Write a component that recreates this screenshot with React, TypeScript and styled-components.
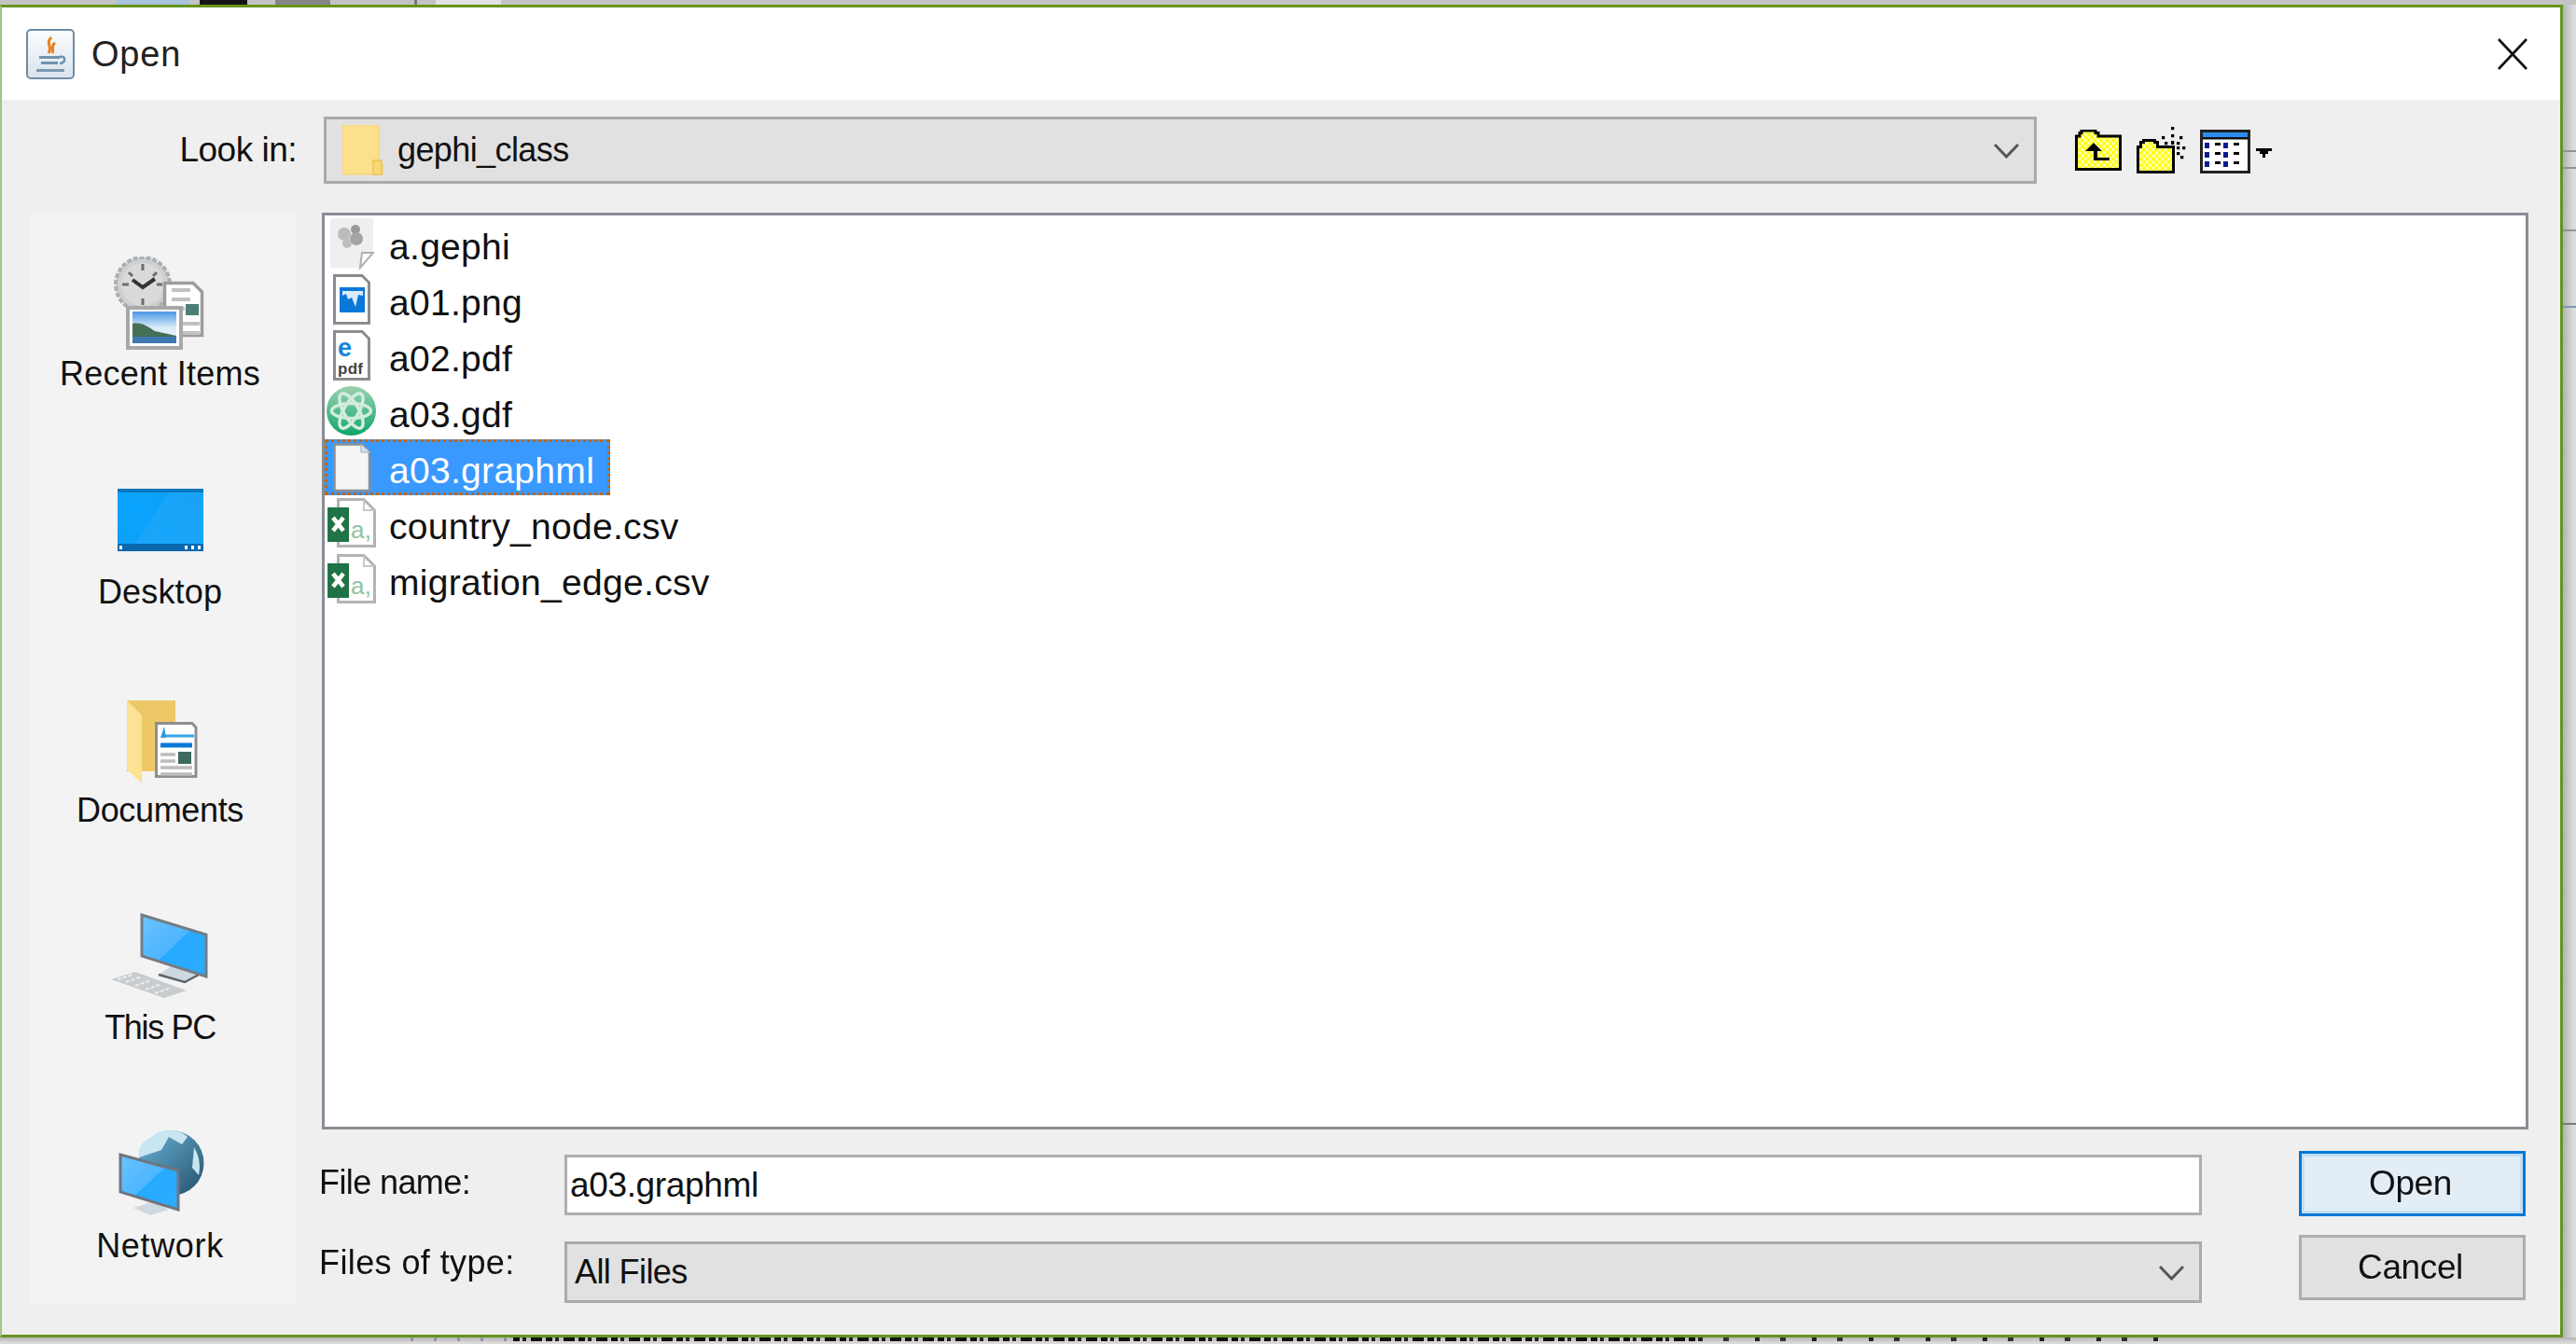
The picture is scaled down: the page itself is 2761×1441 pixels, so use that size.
import React from "react";
import styled, { createGlobalStyle } from "styled-components";

const Global = createGlobalStyle`
  html, body { margin: 0; padding: 0; background: #dcdcdc; }
  body { font-family: "Liberation Sans", Arial, sans-serif; overflow: hidden; }
  * { box-sizing: border-box; }
`;

const Page = styled.div`
  display: grid;
  grid-template-columns: 2747px 14px;
  grid-template-rows: 5px 1429px 7px;
  width: 2761px;
  height: 1441px;
  filter: blur(0.55px);
`;

const TopStrip = styled.div`
  grid-column: 1 / 3;
  display: flex;
  background: #c4c4c4;
`;
const TopSeg = styled.span<{ $x: number; $w: number; $c: string }>`
  width: ${(p) => p.$w}px;
  margin-left: ${(p) => p.$x}px;
  background: ${(p) => p.$c};
`;

const RightGutter = styled.div`
  background:
    linear-gradient(#8d9299, #8d9299) 0 156px / 100% 2px no-repeat,
    linear-gradient(#8d9299, #8d9299) 0 174px / 100% 2px no-repeat,
    linear-gradient(#8d9299, #8d9299) 0 241px / 100% 2px no-repeat,
    linear-gradient(#7f96ad, #7f96ad) 0 323px / 100% 2px no-repeat,
    linear-gradient(#74777c, #74777c) 0 1199px / 100% 2px no-repeat,
    linear-gradient(90deg, #b2b2b2, #d8d8d8 70%, #dedede);
`;

const BottomStrip = styled.div`
  grid-column: 1 / 3;
  background: linear-gradient(#b4b4b4, #d6d6d6 70%, #dddddd);
  padding-left: 440px;
  display: flex;
  align-items: flex-start;
`;
const BottomGlyphs = styled.div<{ $w: number; $pattern: string }>`
  width: ${(p) => p.$w}px;
  height: 4px;
  flex: none;
  background: ${(p) => p.$pattern};
`;
const denseGlyphs =
  "repeating-linear-gradient(90deg, #111 0 7px, transparent 7px 10px, #222 10px 14px, transparent 14px 19px, #111 19px 31px, transparent 31px 35px)";
const sparseGlyphs =
  "repeating-linear-gradient(90deg, #222 0 5px, transparent 5px 27px, #333 27px 33px, transparent 33px 61px)";
const faintGlyphs =
  "repeating-linear-gradient(90deg, #8a93a8 0 3px, transparent 3px 25px)";

const Dialog = styled.div`
  display: flex;
  flex-direction: column;
  background: #efefef;
  border-style: solid;
  border-color: #65951f;
  border-width: 3px 3px 3px 2px;
  border-left-color: #a7c488;
`;

const TitleBar = styled.div`
  height: 99px;
  flex: none;
  display: flex;
  align-items: center;
  background: #fff;
  padding: 0 35px 0 26px;
  color: #222;
`;
const TitleText = styled.span`
  margin-left: 18px;
  font-size: 38px;
  line-height: 46px;
  letter-spacing: 0.8px;
  flex: 1;
`;

const LookRow = styled.div`
  display: flex;
  align-items: center;
  margin-top: 18px;
  height: 72px;
`;
const LookLabel = styled.label`
  width: 316px;
  text-align: right;
  font-size: 37px;
  color: #111;
  margin-right: 29px;
  letter-spacing: -0.5px;
`;
const Combo = styled.div<{ $w: number; $h: number }>`
  display: flex;
  align-items: center;
  width: ${(p) => p.$w}px;
  height: ${(p) => p.$h}px;
  flex: none;
  background: #e1e1e1;
  border: 3px solid #a9a9ae;
  font-size: 36px;
  color: #111;
`;
const ComboText = styled.span`
  flex: 1;
  letter-spacing: -0.6px;
`;
const Toolbar = styled.div`
  display: flex;
  align-items: flex-start;
  margin-left: 41px;
  height: 50px;
`;

const Main = styled.div`
  display: flex;
  margin-top: 31px;
  padding-left: 31px;
  gap: 26px;
  height: 1169px;
`;
const Sidebar = styled.div`
  width: 284px;
  height: 1169px;
  flex: none;
  display: flex;
  flex-direction: column;
  background: #f3f3f3;
`;
const SideItem = styled.div`
  flex: 1;
  display: flex;
  flex-direction: column;
  align-items: center;
  padding-top: 47px;
  padding-right: 4px;
`;
const SideLabel = styled.span<{ $track: number }>`
  margin-top: 6px;
  margin-left: -3px;
  font-size: 36px;
  line-height: 40px;
  letter-spacing: ${(p) => p.$track}px;
  color: #111;
`;
const Column = styled.div`
  width: 2367px;
  display: flex;
  flex-direction: column;
`;
const FileList = styled.div`
  margin-left: 2px;
  width: 2365px;
  height: 983px;
  flex: none;
  background: #fff;
  border: 3px solid #888c94;
  display: flex;
  flex-direction: column;
`;
const Row = styled.div<{ $selected?: boolean }>`
  display: flex;
  align-items: center;
  width: ${(p) => (p.$selected ? "306px" : "auto")};
  height: 60px;
  flex: none;
  font-size: 39px;
  letter-spacing: 0.3px;
  color: ${(p) => (p.$selected ? "#fff" : "#111")};
  background: ${(p) => (p.$selected ? "#3999ff" : "transparent")};
  outline: ${(p) => (p.$selected ? "3px dotted #c4650c" : "none")};
  outline-offset: -3px;
`;
const RowName = styled.span`
  margin-top: 7px;
`;
const RowIcon = styled.svg`
  width: 56px;
  height: 60px;
  flex: none;
  margin-right: 13px;
`;
const Form = styled.div`
  display: flex;
  margin-top: 23px;
`;
const Fields = styled.div`
  width: 2017px;
  display: flex;
  flex-direction: column;
  padding-top: 4px;
  gap: 28px;
`;
const FieldRow = styled.div`
  display: flex;
  align-items: center;
`;
const FieldLabel = styled.label<{ $track: number; $raise: number }>`
  width: 262px;
  flex: none;
  font-size: 36px;
  letter-spacing: ${(p) => p.$track}px;
  color: #111;
  position: relative;
  left: -1px;
  top: ${(p) => -p.$raise}px;
`;
const TextBox = styled.div`
  width: 1755px;
  height: 65px;
  background: #fff;
  border: 3px solid #adadb2;
  padding-left: 3px;
  display: flex;
  align-items: center;
  font-size: 37px;
  letter-spacing: -0.35px;
  color: #111;
`;
const Buttons = styled.div`
  margin-left: 104px;
  width: 243px;
  display: flex;
  flex-direction: column;
  gap: 20px;
`;
const Button = styled.div<{ $primary?: boolean }>`
  height: 70px;
  display: flex;
  align-items: center;
  justify-content: center;
  font-size: 37px;
  letter-spacing: -0.4px;
  padding-right: 4px;
  color: #111;
  background: ${(p) => (p.$primary ? "#e3edf6" : "#e1e1e1")};
  border: 3px solid ${(p) => (p.$primary ? "#0078d7" : "#adadad")};
  box-shadow: ${(p) => (p.$primary ? "inset 0 0 0 3px #c3def5" : "none")};
`;
const Icon = styled.svg`
  display: block;
  flex: none;
`;
const Space = styled.span<{ $w: number }>`
  width: ${(p) => p.$w}px;
  flex: none;
`;

const Defs = () => (
  <svg width="0" height="0" style={{ position: "absolute" }}>
    <defs>
      <pattern id="dither" width="6.6" height="6.6" patternUnits="userSpaceOnUse">
        <rect width="6.6" height="6.6" fill="#ffff00" />
        <rect width="3" height="3" fill="#ffffd8" />
        <rect x="3.3" y="3.3" width="3" height="3" fill="#ffffd8" />
      </pattern>
      <linearGradient id="screen" x1="0" y1="0" x2="1" y2="1">
        <stop offset="0" stopColor="#6cc3ff" />
        <stop offset="0.5" stopColor="#4db5ff" />
        <stop offset="0.5" stopColor="#27a9ff" />
        <stop offset="1" stopColor="#2aacff" />
      </linearGradient>
      <linearGradient id="desk" x1="0" y1="1" x2="1" y2="0">
        <stop offset="0" stopColor="#0e9ff5" />
        <stop offset="0.45" stopColor="#0aa5ff" />
        <stop offset="1" stopColor="#0b9cf0" />
      </linearGradient>
      <linearGradient id="sky" x1="0" y1="0" x2="0" y2="1">
        <stop offset="0" stopColor="#4b95e6" />
        <stop offset="0.5" stopColor="#d7ecf8" />
        <stop offset="1" stopColor="#f0f8ff" />
      </linearGradient>
      <linearGradient id="gdf" x1="0" y1="0" x2="0" y2="1">
        <stop offset="0" stopColor="#9ad2b0" />
        <stop offset="1" stopColor="#10a66b" />
      </linearGradient>
      <linearGradient id="globe" x1="0" y1="0" x2="1" y2="1">
        <stop offset="0" stopColor="#6cb4d8" />
        <stop offset="1" stopColor="#24516b" />
      </linearGradient>
      <linearGradient id="java" x1="0" y1="0" x2="0" y2="1">
        <stop offset="0" stopColor="#fbfcfd" />
        <stop offset="1" stopColor="#d9e3ec" />
      </linearGradient>
    </defs>
  </svg>
);

const JavaIcon = () => (
  <Icon width="52" height="54" viewBox="0 0 52 54">
    <rect x="1" y="1" width="50" height="52" rx="4" fill="url(#java)" stroke="#6f8ba3" strokeWidth="2" />
    <path d="M27 9c-7 7 2 9-3 17M31 15c-5 3-1 7-3 11" fill="none" stroke="#e8801e" strokeWidth="3" />
    <path d="M14 29h22v3H14zM16 35h18v3H16z" fill="#6f93ae" />
    <path d="M36 30c7-2 7 6 0 7" fill="none" stroke="#6f93ae" strokeWidth="2.5" />
    <rect x="11" y="43" width="30" height="3" fill="#7b9ab3" />
  </Icon>
);
const CloseIcon = () => (
  <Icon width="32" height="34" viewBox="0 0 32 34">
    <path d="M1 1L31 33M31 1L1 33" stroke="#111" strokeWidth="2.6" fill="none" />
  </Icon>
);
const FolderSmall = () => (
  <Icon width="44" height="54" viewBox="0 0 44 54">
    <path d="M0 0h39v42h4v11H0z" fill="#fde08c" stroke="#f5cf6a" strokeWidth="1" />
    <rect x="33" y="38" width="9" height="15" fill="#f7d877" stroke="#ebc252" strokeWidth="1.5" />
  </Icon>
);
const Chevron = () => (
  <Icon width="27" height="17" viewBox="0 0 27 17">
    <path d="M1 2L13.5 15L26 2" stroke="#555" strokeWidth="3" fill="none" />
  </Icon>
);
const UpFolder = () => (
  <Icon width="50" height="44" viewBox="0 0 50 44" style={{ marginTop: 3 }}>
    <path d="M5 7V3.5h2V1h15v2.5h3V7h23.5v35.5h-47V7z" fill="url(#dither)" stroke="#000" strokeWidth="3" />
    <path d="M20 14L29 23H24V30H37V33H20V23H11z" fill="#000" />
  </Icon>
);
const NewFolder = () => (
  <Icon width="54" height="50" viewBox="0 0 54 50" style={{ marginLeft: 16 }}>
    <path d="M1.5 48.5V21.5h3v-5h3v-2h12v2h3v5h17v27z" fill="url(#dither)" stroke="#000" strokeWidth="3" />
    <path d="M37 0h3.3v3.3H37zM37 8h3.3v3.3H37zM37 15h3.3v4H37zM27 10h3.3v3.3H27zM30 16h3.3v3.3H30zM46 10h3.3v3.3H46zM43 16h3.3v3.3H43zM49 21h3.3v3.3H49zM43 21h3.3v3.3H43zM43 27h3.3v3.3H43zM47 31h3.3v3.3H47z" fill="#000" />
  </Icon>
);
const DetailRows = [10, 20, 30];
const DetailsIcon = () => (
  <Icon width="54" height="47" viewBox="0 0 54 47" style={{ marginLeft: 14, marginTop: 3 }}>
    <rect x="1.5" y="1.5" width="51" height="44" fill="#fff" stroke="#222" strokeWidth="3" />
    <rect x="3" y="3" width="48" height="5" fill="#2b8cf0" />
    <rect x="3" y="8" width="48" height="2.5" fill="#111" />
    {DetailRows.map((d) => (
      <g key={d}>
        <rect x="5" y={d + 4} width="5" height="6" fill="#0a1a90" />
        <rect x="16" y={d + 4} width="6" height="3" fill="#000" />
        <rect x="25" y={d + 4} width="5" height="6" fill="#0a1a90" />
        <rect x="36" y={d + 4} width="6" height="3" fill="#000" />
      </g>
    ))}
  </Icon>
);
const MenuArrow = () => (
  <Icon width="17" height="10" viewBox="0 0 17 10" style={{ marginLeft: 6, marginTop: 23 }}>
    <path d="M0 0H17V3H13V6H10V10H7V6H4V3H0z" fill="#000" />
  </Icon>
);

const PageBase = ({ x, y, w, h, c = "#8c8c8c" }: { x: number; y: number; w: number; h: number; c?: string }) => (
  <path d={`M${x + 1.5} ${y + 1.5}H${x + w - 9}L${x + w - 1.5} ${y + 9}V${y + h - 1.5}H${x + 1.5}z`} fill="#fff" stroke={c} strokeWidth="3" />
);
const GephiFile = () => (
  <RowIcon viewBox="0 0 56 60">
    <path d="M8 3H50a2 2 0 0 1 2 2V40L38 56H8a2 2 0 0 1-2-2V5a2 2 0 0 1 2-2z" fill="#efefef" />
    <path d="M38 56L52 40H40z" fill="#fff" stroke="#b0b0b0" strokeWidth="2" />
    <circle cx="21" cy="20" r="7" fill="#bbb" />
    <circle cx="33" cy="15" r="5" fill="#999" />
    <circle cx="34" cy="25" r="7" fill="#a4a4a4" />
    <circle cx="24" cy="30" r="5" fill="#bdbdbd" />
  </RowIcon>
);
const PngFile = () => (
  <RowIcon viewBox="0 0 56 60">
    <PageBase x={9} y={3} w={40} h={54} />
    <rect x="16" y="17" width="27" height="27" fill="#0a78d8" />
    <path d="M19 21H41V26L36 25L33 38L29 28L25 30L23 24L19 26z" fill="#dbeafa" />
  </RowIcon>
);
const PdfFile = () => (
  <RowIcon viewBox="0 0 56 60">
    <PageBase x={9} y={3} w={40} h={54} />
    <text x="14" y="31" fontFamily="Liberation Sans" fontWeight="700" fontSize="27" fill="#1583dd">e</text>
    <text x="14" y="50" fontFamily="Liberation Sans" fontWeight="700" fontSize="17" fill="#444">pdf</text>
  </RowIcon>
);
const GdfFile = () => (
  <RowIcon viewBox="0 0 56 60">
    <circle cx="28.5" cy="29.5" r="26.5" fill="url(#gdf)" />
    <g fill="none" stroke="#d2ecdb" strokeWidth="3.5">
      <ellipse cx="28.5" cy="29.5" rx="21" ry="8" />
      <ellipse cx="28.5" cy="29.5" rx="21" ry="8" transform="rotate(60 28.5 29.5)" />
      <ellipse cx="28.5" cy="29.5" rx="21" ry="8" transform="rotate(120 28.5 29.5)" />
    </g>
  </RowIcon>
);
const BlankFile = () => (
  <RowIcon viewBox="0 0 56 60">
    <path d="M10.5 5.5H40L48 13.5V55H10.5z" fill="#f4f5f6" stroke="#8a8f96" strokeWidth="2.5" />
    <path d="M39 5L49 14H39z" fill="#cfe0f2" stroke="#9aa" strokeWidth="1" />
  </RowIcon>
);
const CsvFile = () => (
  <RowIcon viewBox="0 0 56 60">
    <path d="M14.5 4.5H42L53.5 16V54.5H14.5z" fill="#fff" stroke="#b3b3b3" strokeWidth="3" />
    <path d="M42 4.5V16H53.5" fill="none" stroke="#c8c8c8" strokeWidth="2" />
    <rect x="3" y="13" width="23" height="37" fill="#1f7346" />
    <path d="M9 24L20 38M20 24L9 38" stroke="#fff" strokeWidth="4.5" fill="none" />
    <text x="28" y="46" fontFamily="Liberation Sans" fontSize="26" fill="#8fc3a4">a,</text>
  </RowIcon>
);

const RecentIcon = () => (
  <Icon width="110" height="100" viewBox="0 0 110 100">
    <circle cx="35" cy="30" r="29" fill="#cfcfcf" stroke="#a8b0b6" strokeWidth="4" strokeDasharray="5 2" />
    <circle cx="35" cy="30" r="23" fill="#dadada" />
    <path d="M35 8v7M35 45v7M13 30h7M50 30h6M20 17l4 4M50 17l-4 4" stroke="#6e6e6e" strokeWidth="3" />
    <path d="M24 25L35 33L48 24" fill="none" stroke="#333" strokeWidth="4" />
    <path d="M58.5 28.500H89L98.500 38V84.500H58.500z" fill="#fff" stroke="#9c9c9c" strokeWidth="3.500" />
    <path d="M66 36h20M66 46h20M66 56h14M78 72h18M78 82h18" stroke="#c2c2c2" strokeWidth="4" />
    <rect x="81" y="51" width="14" height="12" fill="#4b7f76" />
    <rect x="19" y="55" width="57" height="43" fill="#fff" stroke="#a8a8a8" strokeWidth="4" />
    <rect x="24" y="59" width="47" height="34" fill="url(#sky)" />
    <path d="M24 72c10-2 16 3 24 8l23 5v1H24z" fill="#456f56" />
    <path d="M24 86h47v7H24z" fill="#3f78b0" />
  </Icon>
);
const DesktopIcon = () => (
  <Icon width="110" height="100" viewBox="0 0 110 100">
    <rect x="8" y="15" width="92" height="67" fill="url(#desk)" />
    <rect x="8" y="15" width="92" height="4" fill="#0676bf" />
    <path d="M25 78L62 19H100V78z" fill="#2aa9f8" opacity="0.45" />
    <rect x="8" y="74" width="92" height="8" fill="#0a69ad" />
    <path d="M10 76h3v4h-3zM80 76h3v4h-3zM87 76h3v4h-3zM94 76h3v4h-3z" fill="#fff" />
  </Icon>
);
const DocumentsIcon = () => (
  <Icon width="110" height="100" viewBox="0 0 110 100">
    <path d="M18 8H70V84H18z" fill="#ecc867" />
    <path d="M18 8L34 24V97L18 82z" fill="#fde293" />
    <path d="M49.500 32.500H88L92 37V89.500H49.500z" fill="#fff" stroke="#8f8f8f" strokeWidth="3" />
    <path d="M56 46H90" stroke="#35a5e8" strokeWidth="3" />
    <path d="M54 56H88" stroke="#0a78d8" strokeWidth="5" />
    <path d="M54 66H70M54 73H70M54 80H88M54 87H88" stroke="#bcbcbc" strokeWidth="3.500" />
    <rect x="73" y="63" width="14" height="13" fill="#3d6a5e" />
    <path d="M58 36L54 48H60z" fill="#2e9ae0" />
  </Icon>
);
const ThisPcIcon = () => (
  <Icon width="110" height="100" viewBox="0 0 110 100">
    <polygon points="1,74 27,66 82,86 58,94" fill="#c8cccf" />
    <path d="M8 74L24 69M17 77L34 71M27 81L44 75M38 85L55 79M48 89L65 83" stroke="#eceeef" strokeWidth="2" strokeDasharray="4 2" fill="none" />
    <polygon points="52,69 67,59 95,69 80,77" fill="#ced8df" />
    <path d="M52 69L80 77L95 69" fill="none" stroke="#5c6369" strokeWidth="2.5" />
    <polygon points="34,5 103,26 103,71 34,49" fill="url(#screen)" stroke="#747c85" strokeWidth="3" />
  </Icon>
);
const NetworkIcon = () => (
  <Icon width="110" height="100" viewBox="0 0 110 100">
    <circle cx="65.500" cy="37" r="35" fill="url(#globe)" />
    <path d="M45 9c8-9 28-10 38 0l-6 8-14-8-8 14-12 4-12 4c-2-10 4-18 14-22zM90 20c6 10 7 20 5 30l-7-8z" fill="#c8e6f0" />
    <polygon points="25,85 47,78 63,87 43,93" fill="#ced8df" />
    <polygon points="11,28 73,45 73,87 11,68" fill="url(#screen)" stroke="#6d7680" strokeWidth="3" />
  </Icon>
);

const sideItems = [
  { label: "Recent Items", track: 0.25, icon: <RecentIcon /> },
  { label: "Desktop", track: 0.15, icon: <DesktopIcon /> },
  { label: "Documents", track: -0.35, icon: <DocumentsIcon /> },
  { label: "This PC", track: -1.35, icon: <ThisPcIcon /> },
  { label: "Network", track: 0.65, icon: <NetworkIcon /> },
];
const files = [
  { name: "a.gephi", icon: <GephiFile /> },
  { name: "a01.png", icon: <PngFile /> },
  { name: "a02.pdf", icon: <PdfFile /> },
  { name: "a03.gdf", icon: <GdfFile /> },
  { name: "a03.graphml", icon: <BlankFile />, selected: true },
  { name: "country_node.csv", icon: <CsvFile /> },
  { name: "migration_edge.csv", icon: <CsvFile /> },
];

export default function App() {
  return (
    <>
      <Global />
      <Defs />
      <Page>
        <TopStrip>
          <TopSeg $x={125} $w={78} $c="#a9c3dc" />
          <TopSeg $x={11} $w={51} $c="#151515" />
          <TopSeg $x={30} $w={59} $c="#858585" />
          <TopSeg $x={90} $w={3} $c="#777" />
          <TopSeg $x={20} $w={70} $c="#e2e2e2" />
        </TopStrip>
        <Dialog>
          <TitleBar>
            <JavaIcon />
            <TitleText>Open</TitleText>
            <CloseIcon />
          </TitleBar>
          <LookRow>
            <LookLabel>Look in:</LookLabel>
            <Combo $w={1836} $h={72}>
              <Space $w={17} />
              <FolderSmall />
              <Space $w={15} />
              <ComboText>gephi_class</ComboText>
              <Chevron />
              <Space $w={16} />
            </Combo>
            <Toolbar>
              <UpFolder />
              <NewFolder />
              <DetailsIcon />
              <MenuArrow />
            </Toolbar>
          </LookRow>
          <Main>
            <Sidebar>
              {sideItems.map((s) => (
                <SideItem key={s.label}>
                  {s.icon}
                  <SideLabel $track={s.track}>{s.label}</SideLabel>
                </SideItem>
              ))}
            </Sidebar>
            <Column>
              <FileList>
                {files.map((f) => (
                  <Row key={f.name} $selected={f.selected}>
                    {f.icon}
                    <RowName>{f.name}</RowName>
                  </Row>
                ))}
              </FileList>
              <Form>
                <Fields>
                  <FieldRow>
                    <FieldLabel $track={-0.6} $raise={3}>File name:</FieldLabel>
                    <TextBox>a03.graphml</TextBox>
                  </FieldRow>
                  <FieldRow>
                    <FieldLabel $track={0.4} $raise={10}>Files of type:</FieldLabel>
                    <Combo $w={1755} $h={66}>
                      <Space $w={8} />
                      <ComboText>All Files</ComboText>
                      <Chevron />
                      <Space $w={16} />
                    </Combo>
                  </FieldRow>
                </Fields>
                <Buttons>
                  <Button $primary>Open</Button>
                  <Button>Cancel</Button>
                </Buttons>
              </Form>
            </Column>
          </Main>
        </Dialog>
        <RightGutter />
        <BottomStrip>
          <BottomGlyphs $w={110} $pattern={faintGlyphs} />
          <BottomGlyphs $w={1270} $pattern={denseGlyphs} />
          <BottomGlyphs $w={513} $pattern={sparseGlyphs} />
        </BottomStrip>
      </Page>
    </>
  );
}
